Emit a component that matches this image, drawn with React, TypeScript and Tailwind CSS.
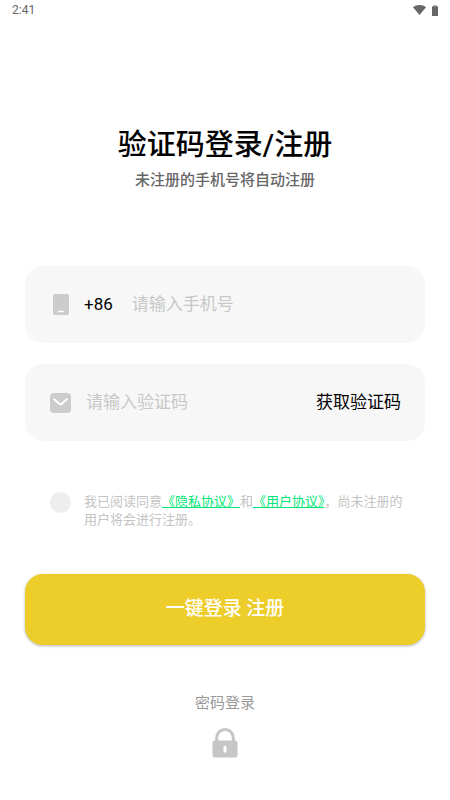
import { useState } from "react";

function StatusBar() {
  return (
    <header className="flex h-5 items-center justify-between px-3 text-[#666]">
      <span className="text-[12px] leading-5">2:41</span>
      <div className="flex items-center gap-1.5">
        <svg width="13" height="10" viewBox="0 0 13 10" fill="currentColor" aria-hidden="true">
          <path d="M6.5 10 0 2.2C1.8.8 4 0 6.5 0S11.200.8 13 2.200z" />
        </svg>
        <svg width="6" height="11" viewBox="0 0 6 11" fill="currentColor" aria-hidden="true">
          <path d="M1.500 0h3v1.200h-3z" opacity=".6" />
          <rect y="1.200" width="6" height="9.800" rx=".6" />
        </svg>
      </div>
    </header>
  );
}

function PhoneIcon() {
  return (
    <svg className="shrink-0" width="16" height="21" viewBox="0 0 16 21" aria-hidden="true">
      <rect width="16" height="21" rx="2" fill="#ccc" />
      <path d="M5.500 17.500h5" stroke="#fff" strokeWidth="1.400" strokeLinecap="round" />
    </svg>
  );
}

function MailIcon() {
  return (
    <svg className="shrink-0" width="21" height="20" viewBox="0 0 21 20" aria-hidden="true">
      <rect width="21" height="20" rx="4" fill="#ccc" />
      <path
        d="M4.200 6.200l4.700 4.400a2.300 2.300 0 0 0 3.200 0L16.800 6.200"
        fill="none"
        stroke="#fff"
        strokeWidth="2"
        strokeLinecap="round"
      />
    </svg>
  );
}

function LockIcon() {
  return (
    <svg width="26" height="30" viewBox="0 0 26 30" aria-hidden="true">
      <path d="M4.700 14V9.800a8.300 8.300 0 0 1 16.600 0V14" fill="none" stroke="#c6c6c6" strokeWidth="3" />
      <rect x=".5" y="12.500" width="25" height="17" rx="2.500" fill="#c6c6c6" />
      <rect x="11.500" y="18" width="3" height="6.500" rx="1" fill="#fff" />
    </svg>
  );
}

export default function App() {
  const [phone, setPhone] = useState("");
  const [code, setCode] = useState("");
  const [agreed, setAgreed] = useState(false);

  return (
    <div className="min-h-screen bg-white font-[Roboto,'Noto_Sans_CJK_SC',sans-serif] text-black">
      <StatusBar />

      <main className="px-[25px] pt-[105px]">
        <div className="text-center">
          <h1 className="text-[29px] font-medium leading-10">验证码登录/注册</h1>
          <p className="mt-[3px] text-[15px] font-medium leading-6 text-[#666]">未注册的手机号将自动注册</p>
        </div>

        <form className="mt-[74px]" onSubmit={(e) => e.preventDefault()}>
          <div className="flex h-[77px] items-center rounded-[18px] bg-[#f7f7f7] pl-7 pr-6">
            <PhoneIcon />
            <span className="ml-[15px] text-[17px]">+86</span>
            <input
              type="tel"
              aria-label="手机号"
              placeholder="请输入手机号"
              value={phone}
              onChange={(e) => setPhone(e.target.value)}
              className="ml-[19px] min-w-0 flex-1 bg-transparent text-[17px] outline-none placeholder:text-[#c8c8c8]"
            />
          </div>

          <div className="mt-[21px] flex h-[77px] items-center rounded-[18px] bg-[#f7f7f7] pl-[25px] pr-6">
            <MailIcon />
            <input
              type="text"
              aria-label="验证码"
              placeholder="请输入验证码"
              value={code}
              onChange={(e) => setCode(e.target.value)}
              className="ml-[15px] min-w-0 flex-1 bg-transparent text-[17px] outline-none placeholder:text-[#c8c8c8]"
            />
            <button type="button" className="shrink-0 text-[17px]">获取验证码</button>
          </div>

          <div className="mt-[51px] flex items-start pl-[25px] pr-5">
            <input
              id="agree"
              type="checkbox"
              checked={agreed}
              onChange={(e) => setAgreed(e.target.checked)}
              className="size-[21px] shrink-0 appearance-none rounded-full bg-[#eee] checked:bg-[#eccd2a]"
            />
            <label htmlFor="agree" className="ml-[13px] mt-px text-[13px] leading-[18px] text-[#c4c4c4]">
              我已阅读同意
              <a href="#privacy" className="text-[#00e676] underline">《隐私协议》</a>
              和
              <a href="#terms" className="text-[#00e676] underline">《用户协议》</a>
              ，尚未注册的
              <wbr />
              用户将会进行注册。
            </label>
          </div>

          <button
            type="submit"
            className="mt-[45px] h-[71px] w-full rounded-[18px] bg-[#eccd2a] text-[19px] font-medium text-white shadow-[0_1px_3px_rgba(0,0,0,0.3)]"
          >
            一键登录 注册
          </button>
        </form>

        <a href="#password" className="mx-auto mt-[46px] flex w-fit flex-col items-center gap-[13px] text-[15px] leading-6 text-[#999]">
          密码登录
          <LockIcon />
        </a>
      </main>
    </div>
  );
}
